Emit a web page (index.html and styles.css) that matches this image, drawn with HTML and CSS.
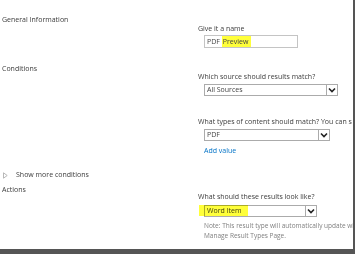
FILE: index.html
```html
<!DOCTYPE html>
<html>
<head>
<meta charset="utf-8">
<link rel="stylesheet" href="styles.css">
</head>
<body>
<div class="frame">
  <div class="section s-general">
    <div class="head">General Information</div>
    <div class="body b-general">
      <div class="label">Give it a name</div>
      <div class="input in-name">PDF <span class="mark">Preview</span></div>
    </div>
  </div>
  <div class="section s-cond">
    <div class="head">Conditions</div>
    <div class="body b-cond">
      <div class="label">Which source should results match?</div>
      <div class="select sel-source"><span class="val">All Sources</span><span class="arrow"><svg width="8" height="6" viewBox="0 0 8 6"><path d="M1 1.5 L4 4.5 L7 1.5" fill="none" stroke="#222" stroke-width="1.6"/></svg></span></div>
      <div class="label l-types">What types of content should match? You can s</div>
      <div class="select sel-types"><span class="val">PDF</span><span class="arrow"><svg width="8" height="6" viewBox="0 0 8 6"><path d="M1 1.5 L4 4.5 L7 1.5" fill="none" stroke="#222" stroke-width="1.6"/></svg></span></div>
      <div class="link">Add value</div>
    </div>
  </div>
  <div class="more"><svg class="tri" width="5" height="7" viewBox="0 0 5 7"><path d="M0.5 0.8 L4.2 3.5 L0.5 6.2 Z" fill="none" stroke="#b0b0b0" stroke-width="0.9"/></svg><span>Show more conditions</span></div>
  <div class="section s-act">
    <div class="head">Actions</div>
    <div class="body b-act">
      <div class="label">What should these results look like?</div>
      <div class="select sel-look"><span class="val">Word Item</span><span class="arrow"><svg width="8" height="6" viewBox="0 0 8 6"><path d="M1 1.5 L4 4.5 L7 1.5" fill="none" stroke="#222" stroke-width="1.6"/></svg></span><span class="hl"></span></div>
      <div class="note">Note: This result type will automatically update wit<br>Manage Result Types Page.</div>
    </div>
  </div>
</div>
</body>
</html>
```
FILE: styles.css
```css
html, body {
  margin: 0;
  padding: 0;
  background: #ffffff;
}
.frame {
  width: 351px;
  height: 249px;
  background: #ffffff;
  border-right: 4px solid #555555;
  border-bottom: 5px solid #555555;
  overflow: hidden;
  font-family: "Open Sans", "Noto Sans", sans-serif;
  font-size: 7px;
  color: #3c3c3c;
  padding-left: 2px;
  box-sizing: content-box;
  white-space: nowrap;
}
.section {
  display: grid;
  grid-template-columns: 196px 1fr;
}
.head {
  line-height: 12px;
  height: 12px;
}
.label {
  line-height: 12px;
  height: 12px;
}
.s-general { margin-top: 14px; }
.b-general { padding-top: 9px; }
.s-cond { margin-top: 15px; }
.b-cond { padding-top: 8px; }
.s-act { margin-top: 3px; }
.b-act { padding-top: 7px; }

.input {
  margin-left: 6px;
  width: 94px;
  height: 13px;
  box-sizing: border-box;
  border: 1px solid #c4c4c4;
  line-height: 11px;
  padding-left: 2px;
  color: #444;
}
.mark {
  background: #ffff3a;
  padding: 1px 3px 1px 1px;
}
.select {
  position: relative;
  margin-left: 6px;
  margin-top: 1px;
  height: 12px;
  box-sizing: border-box;
  border: 1px solid #ababab;
  display: flex;
  align-items: stretch;
  background: #fff;
}
.select .val {
  flex: 1;
  line-height: 10px;
  padding-left: 2px;
  color: #444;
}
.select .arrow {
  width: 10px;
  border-left: 1px solid #ababab;
  display: flex;
  align-items: center;
  justify-content: center;
  background: #fff;
}
.sel-source { width: 134px; }
.sel-types { width: 126px; }
.sel-look { width: 113px; margin-top: 2px; }
.l-types { margin-top: 20px; }
.link {
  margin-left: 6px;
  margin-top: 4px;
  line-height: 12px;
  color: #0072c6;
}
.more {
  margin-top: 12px;
  height: 12px;
  line-height: 12px;
  display: flex;
  align-items: center;
}
.more .tri {
  margin-left: 1px;
  margin-right: 8px;
}
.hl {
  position: absolute;
  left: -6px;
  top: -1px;
  width: 49px;
  height: 11px;
  background: #ffff3a;
  mix-blend-mode: multiply;
}
.note {
  margin-left: 6px;
  margin-top: 4px;
  line-height: 10px;
  font-size: 6.5px;
  color: #808080;
}
```
